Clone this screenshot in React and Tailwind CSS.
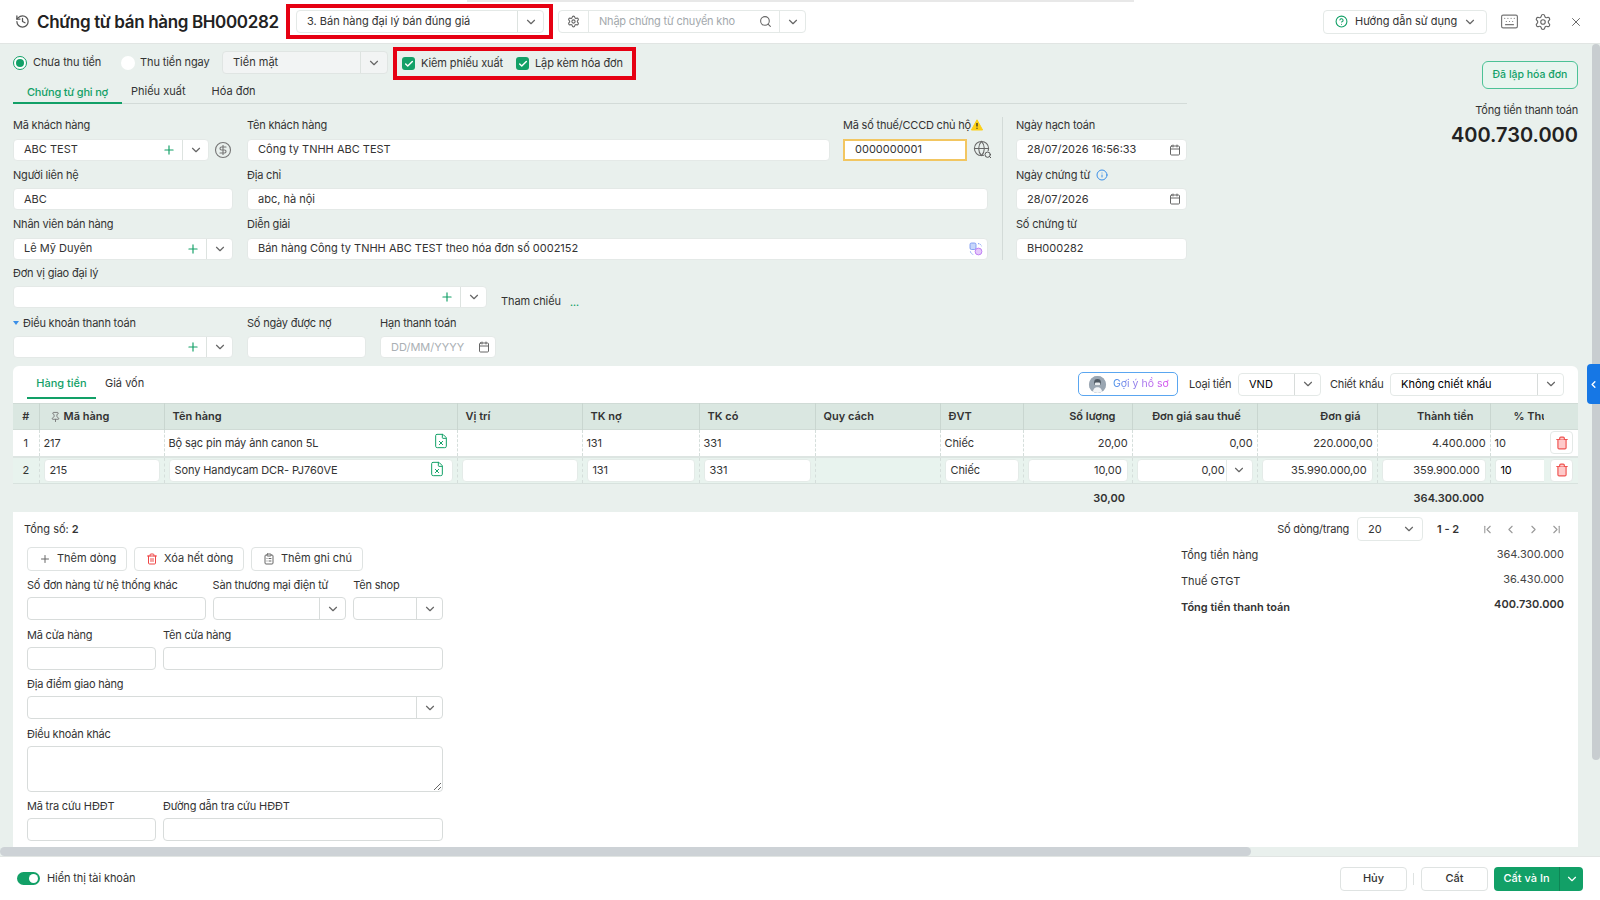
import React from "react";
import {
  History,
  ChevronDown,
  ChevronLeft,
  ChevronRight,
  ChevronFirst,
  ChevronLast,
  Settings,
  Search,
  CircleHelp,
  Keyboard,
  X,
  Plus,
  CircleDollarSign,
  Globe,
  Calendar,
  Info,
  Trash2,
  Pin,
  FileX,
  ClipboardList,
  Check,
} from "lucide-react";

// ô nhập cơ bản
function Box({ className = "", children }) {
  return (
    <div className={`h-[22px] bg-white rounded-[4px] border border-[#e4e9e7] flex items-center text-[11px] text-[#333] ${className}`}>
      {children}
    </div>
  );
}

function Combo({ value, plus, className = "" }) {
  return (
    <Box className={className}>
      <span className="flex-1 pl-[10px] truncate">{value}</span>
      {plus && <Plus className="w-[14px] h-[14px] text-[#12a067] mr-[6px]" strokeWidth={2} />}
      <span className="w-[26px] h-full border-l border-[#dde3e0] flex items-center justify-center shrink-0">
        <ChevronDown className="w-[14px] h-[14px] text-[#666]" />
      </span>
    </Box>
  );
}

function Field({ label, children, className = "" }) {
  return (
    <div className={`h-[49.5px] shrink-0 ${className}`}>
      <div className="h-[26.5px] flex items-center text-[11px] tracking-[-0.2px] text-[#333] whitespace-nowrap">{label}</div>
      {children}
    </div>
  );
}

function Check2({ label, className = "" }) {
  return (
    <div className={`flex items-center ${className}`}>
      <span className="w-[13px] h-[13px] rounded-[3px] bg-[#12a067] flex items-center justify-center">
        <Check className="w-[10px] h-[10px] text-white" strokeWidth={3.5} />
      </span>
      <span className="ml-[6px] text-[11px] tracking-[-0.1px] text-[#333] whitespace-nowrap">{label}</span>
    </div>
  );
}

function CalendarInput({ value, placeholder, className = "" }) {
  return (
    <Box className={className}>
      <span className={`flex-1 pl-[10px] ${placeholder ? "text-[#aab0b4]" : ""}`}>{value}</span>
      <Calendar className="w-[12px] h-[12px] text-[#666] mr-[5px]" />
    </Box>
  );
}

function SheetIcon() {
  return <FileX className="w-[16px] h-[16px] text-[#12a067] -mt-[3px]" strokeWidth={1.5} />;
}

function DelBtn() {
  return (
    <span className="w-[23px] h-[23px] rounded-[4px] bg-white border border-[#e4e9e7] flex items-center justify-center">
      <Trash2 className="w-[14px] h-[14px] text-[#ef5350] fill-[#fecaca]" />
    </span>
  );
}

function SoftBox({ className = "", chevron, children }) {
  return (
    <div className={`h-[23px] bg-white rounded-[4px] border border-[#d8dcdb] flex items-center text-[11px] ${className}`}>
      <span className="flex-1">{children}</span>
      {chevron && (
        <span className="w-[26px] h-full border-l border-[#d8dcdb] flex items-center justify-center">
          <ChevronDown className="w-[14px] h-[14px] text-[#666]" />
        </span>
      )}
    </div>
  );
}

function SmallLabel({ children, className = "" }) {
  return <div className={`h-[26.5px] pt-[3px] flex items-center text-[11px] tracking-[-0.2px] text-[#333] whitespace-nowrap ${className}`}>{children}</div>;
}

function CellInput({ children, right, className = "" }) {
  return (
    <div className={`h-[23px] bg-white rounded-[4px] border border-[#e4ebe8] flex items-center px-[5px] text-[11px] tracking-[-0.1px] ${right ? "justify-end" : ""} ${className}`}>
      {children}
    </div>
  );
}

function WarnIcon() {
  return (
    <svg viewBox="0 0 12 12" className="w-[12px] h-[12px]">
      <path d="M6 .8 11.6 11H.4Z" fill="#fdd017" stroke="#fdd017" strokeLinejoin="round" />
      <path d="M6 4v3.6M6 8.8v1" stroke="#222" strokeWidth="1.2" />
    </svg>
  );
}

function TemplateIcon() {
  return (
    <svg viewBox="0 0 14 14" className="w-[14px] h-[14px]">
      <rect x="1" y="1" width="6" height="6.5" rx="1.5" fill="#c7d7fb" stroke="#6f8ff0" strokeWidth=".8" />
      <circle cx="9.5" cy="9.5" r="3.4" fill="#e5c8fb" stroke="#b36cf0" strokeWidth=".8" />
      <path d="M9 1.6c2 0 3.4 1.3 3.6 3M1.4 9.4c.2 1.7 1.5 3 3.4 3.2" fill="none" stroke="#6f8ff0" strokeWidth=".9" strokeDasharray="1.4 1" />
    </svg>
  );
}

function Avatar() {
  return (
    <span className="w-[17px] h-[17px] rounded-full bg-[#aab4bf] flex items-center justify-center overflow-hidden shrink-0">
      <svg viewBox="0 0 16 16" className="w-[17px] h-[17px]">
        <rect width="16" height="16" fill="#9aa6b2" />
        <circle cx="8" cy="6" r="3.2" fill="#4f5963" />
        <rect x="5.6" y="6" width="4.8" height="3" rx="1" fill="#e8ecef" />
        <path d="M3.4 16c.3-3.8 2.2-5.4 4.6-5.4s4.300 1.600 4.600 5.400Z" fill="#f3f5f7" />
      </svg>
    </span>
  );
}

export default function App() {
  const th = "border-r border-[#c9d6d0] px-[8px] font-semibold text-[11px] text-[#333]";
  const td = "border-r border-dashed border-[#d5dedb] px-[4px] text-[11px] tracking-[-0.1px] text-[#333]";

  return (
    <div className="w-[1600px] h-[900px] overflow-hidden relative flex flex-col bg-[#e9f0ed]" style={{ fontFamily: "Inter, 'Noto Sans', sans-serif" }}>
      {/* dải xám trên cùng */}
      <div className="absolute top-0 left-[467px] w-[667px] h-[2px] bg-[#e8e8e8]" />

      {/* Header */}
      <header className="h-[44px] shrink-0 bg-white border-b border-[#e1e5e3] flex items-center pl-[15px] pr-[17px]">
        <History className="w-[15px] h-[15px] text-[#555]" />
        <h1 className="ml-[7px] w-[243px] text-[17px] leading-[24px] tracking-[-0.35px] font-semibold text-[#222] whitespace-nowrap">Chứng từ bán hàng BH000282</h1>
        <div className="ml-[6px] w-[267px] h-[35px] border-[4px] border-[#e60012] flex items-center pl-[6px] pr-[5px]">
          <div className="w-full h-[23px] bg-white rounded-[4px] border border-[#e4e9e7] flex items-center text-[11px] text-[#333]">
            <span className="flex-1 pl-[10px]">3. Bán hàng đại lý bán đúng giá</span>
            <span className="w-[26px] h-full border-l border-[#dde3e0] flex items-center justify-center">
              <ChevronDown className="w-[14px] h-[14px] text-[#666]" />
            </span>
          </div>
        </div>
        <div className="ml-[5px] w-[248px] h-[23px] rounded-[4px] border border-[#e4e9e7] flex items-center">
          <span className="w-[30px] h-full border-r border-[#e4e9e7] flex items-center justify-center">
            <Settings className="w-[13px] h-[13px] text-[#666]" />
          </span>
          <span className="flex-1 pl-[10px] text-[11px] tracking-[-0.2px] text-[#a3a9ad]">Nhập chứng từ chuyển kho</span>
          <Search className="w-[13px] h-[13px] text-[#666] mr-[7px]" />
          <span className="w-[26px] h-full border-l border-[#e4e9e7] flex items-center justify-center">
            <ChevronDown className="w-[14px] h-[14px] text-[#666]" />
          </span>
        </div>
        <div className="ml-auto w-[164px] h-[24px] rounded-[4px] border border-[#e4e9e7] flex items-center text-[11px] text-[#333]">
          <CircleHelp className="ml-[11px] w-[13px] h-[13px] text-[#12a067]" />
          <span className="ml-[7px] flex-1 whitespace-nowrap">Hướng dẫn sử dụng</span>
          <ChevronDown className="w-[14px] h-[14px] text-[#666] mr-[9px]" />
        </div>
        <Keyboard className="ml-[13px] w-[19px] h-[19px] text-[#777]" strokeWidth={1.5} />
        <Settings className="ml-[15px] w-[18px] h-[18px] text-[#666]" strokeWidth={1.5} />
        <X className="ml-[17px] w-[14px] h-[14px] text-[#555]" strokeWidth={1.5} />
      </header>

      {/* Nội dung */}
      <div className="flex-1 min-h-0 flex flex-col">
        <div className="flex-1 min-h-0 flex flex-col pl-[13px] pr-[22px]">
          <div className="flex shrink-0">
            <div className="w-[1174px]">
              {/* Thanh radio */}
              <div className="h-[36px] flex items-start">
                <div className="mt-[7px] h-[23px] flex items-center">
                  <span className="w-[14px] h-[14px] rounded-full bg-white border border-[#12a067] flex items-center justify-center">
                    <span className="w-[8px] h-[8px] rounded-full bg-[#12a067]" />
                  </span>
                  <span className="ml-[6px] w-[88px] text-[11px] tracking-[-0.1px] text-[#333]">Chưa thu tiền</span>
                  <span className="w-[14px] h-[14px] rounded-full bg-white" />
                  <span className="ml-[5px] w-[82px] text-[11px] tracking-[-0.1px] text-[#333] whitespace-nowrap">Thu tiền ngay</span>
                  <div className="w-[166px] h-[23px] bg-[#f2f4f4] rounded-[4px] border border-[#e0e5e3] flex items-center text-[11px] text-[#333]">
                    <span className="flex-1 pl-[10px]">Tiền mặt</span>
                    <span className="w-[27px] h-full border-l border-[#dde3e0] flex items-center justify-center">
                      <ChevronDown className="w-[14px] h-[14px] text-[#666]" />
                    </span>
                  </div>
                </div>
                <div className="ml-[5px] mt-[3px] w-[243px] h-[33px] border-[4px] border-[#e60012] flex items-center pl-[5px]">
                  <Check2 label="Kiêm phiếu xuất" className="w-[114px]" />
                  <Check2 label="Lập kèm hóa đơn" />
                </div>
              </div>

              {/* Tabs */}
              <div className="h-[24px] flex items-end border-b border-[#d3dbd8] text-[11px]">
                <div className="w-[109px] h-[24px] pt-[4px] text-center tracking-[-0.2px] border-b-[2px] border-[#12a067] text-[#12a067] -mb-px font-medium">Chứng từ ghi nợ</div>
                <div className="ml-[9px] h-[24px] pt-[4px] text-[#333]">Phiếu xuất</div>
                <div className="ml-[26px] h-[24px] pt-[4px] text-[#333]">Hóa đơn</div>
              </div>

              {/* Form */}
              <div className="mt-[8px] flex">
                <div className="w-[220px]">
                  <Field label="Mã khách hàng">
                    <div className="flex items-center">
                      <Combo value="ABC TEST" plus className="w-[196px]" />
                      <CircleDollarSign className="ml-[5px] w-[18px] h-[18px] text-[#777]" strokeWidth={1.5} />
                    </div>
                  </Field>
                  <Field label="Người liên hệ">
                    <Box className="w-[220px] pl-[10px]">ABC</Box>
                  </Field>
                  <Field label="Nhân viên bán hàng">
                    <Combo value="Lê Mỹ Duyên" plus className="w-[220px]" />
                  </Field>
                </div>
                <div className="ml-[14px] w-[741px] shrink-0">
                  <div className="flex">
                    <Field label="Tên khách hàng" className="w-[583px]">
                      <Box className="pl-[10px]">Công ty TNHH ABC TEST</Box>
                    </Field>
                    <Field className="ml-[13px] w-[124px]" label={
                      <span className="flex items-center">Mã số thuế/CCCD chủ hộ<WarnIcon /></span>
                    }>
                      <div className="h-[22px] bg-white border-[2px] border-[#f2c661] flex items-center pl-[10px] text-[11px] text-[#333]">0000000001</div>
                    </Field>
                    <span className="ml-[6px] mt-[28px] relative w-[18px] h-[18px] shrink-0">
                      <Globe className="w-[17px] h-[17px] text-[#666]" strokeWidth={1.5} />
                      <Search className="absolute -right-[1px] -bottom-[1px] w-[8px] h-[8px] text-[#555] bg-[#e9f0ed] rounded-full" strokeWidth={3} />
                    </span>
                  </div>
                  <Field label="Địa chỉ">
                    <Box className="pl-[10px]">abc, hà nội</Box>
                  </Field>
                  <Field label="Diễn giải">
                    <Box className="pl-[10px] justify-between pr-[4px]">
                      <span>Bán hàng Công ty TNHH ABC TEST theo hóa đơn số 0002152</span>
                      <TemplateIcon />
                    </Box>
                  </Field>
                </div>
                <div className="ml-[14px] mt-[5px] h-[143px] w-px bg-[#d3dbd8] shrink-0" />
                <div className="ml-[13px] w-[171px]">
                  <Field label="Ngày hạch toán">
                    <CalendarInput value="28/07/2026 16:56:33" />
                  </Field>
                  <Field label={<span className="flex items-center">Ngày chứng từ<Info className="ml-[6px] w-[12px] h-[12px] text-[#3b8fe8]" /></span>}>
                    <CalendarInput value="28/07/2026" />
                  </Field>
                  <Field label="Số chứng từ">
                    <Box className="pl-[10px]">BH000282</Box>
                  </Field>
                </div>
              </div>
              <div className="flex -mt-[1px]">
                <Field label="Đơn vị giao đại lý" className="w-[474px]">
                  <Combo plus className="w-[474px]" />
                </Field>
                <div className="ml-[14px] w-[57px] pt-[33px] text-[11px] tracking-[-0.1px] text-[#333] whitespace-nowrap">Tham chiếu</div>
                <div className="ml-[12px] pt-[35px] text-[9px] leading-[16px] font-bold text-[#12a067]">...</div>
              </div>
              <div className="flex -mt-[1px]">
                <Field className="w-[220px]" label={
                  <span className="flex items-center"><span className="w-0 h-0 border-x-[3px] border-x-transparent border-t-[4px] border-t-[#3b8fe8] mr-[1px]" /><span className="ml-[3px]">Điều khoản thanh toán</span></span>
                }>
                  <Combo plus className="w-[220px]" />
                </Field>
                <Field label="Số ngày được nợ" className="ml-[14px] w-[119px]">
                  <Box />
                </Field>
                <Field label="Hạn thanh toán" className="ml-[14px] w-[116px]">
                  <CalendarInput value="DD/MM/YYYY" placeholder />
                </Field>
              </div>
            </div>

            {/* Cột phải */}
            <div className="flex-1 flex flex-col items-end">
              <button className="mt-[17px] w-[96px] h-[28px] rounded-[6px] border border-[#4cc296] bg-[#e8f5ef] text-[10.5px] font-medium text-[#12a067]">Đã lập hóa đơn</button>
              <div className="mt-[13px] text-[11px] tracking-[-0.2px] text-[#333]">Tổng tiền thanh toán</div>
              <div className="mt-[2px] text-[20px] leading-[28px] font-semibold text-[#222]">400.730.000</div>
            </div>
          </div>

          {/* Card bảng */}
          <div className="mt-[7px] flex-1 min-h-0 bg-white rounded-t-[6px] overflow-hidden flex flex-col">
            <div className="h-[37px] shrink-0 flex items-start">
              <div className="ml-[14px] w-[69px] h-[33px] pt-[9px] text-center border-b-[2px] border-[#12a067] text-[11px] font-medium text-[#12a067]">Hàng tiền</div>
              <div className="ml-[9px] pt-[9px] text-[11px] text-[#333]">Giá vốn</div>
              <div className="ml-auto mt-[6px] flex items-center mr-[14px]">
                <div className="w-[100px] h-[24px] rounded-[5px] border border-[#5aa6f0] flex items-center pl-[10px]">
                  <Avatar />
                  <span className="ml-[7px] text-[10.5px] bg-gradient-to-r from-[#3b8fe8] to-[#d946ef] bg-clip-text text-transparent whitespace-nowrap">Gợi ý hồ sơ</span>
                </div>
                <span className="ml-[11px] w-[49px] text-[11px] tracking-[-0.2px] text-[#333]">Loại tiền</span>
                <SoftBox chevron className="w-[83px] pl-[10px] border-[#e4e9e7]">VND</SoftBox>
                <span className="ml-[9px] w-[60px] text-[11px] tracking-[-0.2px] text-[#333]">Chiết khấu</span>
                <SoftBox chevron className="w-[174px] pl-[10px] border-[#e4e9e7]">Không chiết khấu</SoftBox>
              </div>
            </div>

            <table className="w-[1565px] table-fixed border-collapse shrink-0">
              <colgroup>
                <col className="w-[26px]" />
                <col className="w-[125px]" />
                <col className="w-[293px]" />
                <col className="w-[125px]" />
                <col className="w-[117px]" />
                <col className="w-[116px]" />
                <col className="w-[125px]" />
                <col className="w-[83px]" />
                <col className="w-[109px]" />
                <col className="w-[125px]" />
                <col className="w-[120px]" />
                <col className="w-[113px]" />
                <col className="w-[53px]" />
                <col className="w-[35px]" />
              </colgroup>
              <thead>
                <tr className="h-[26px] bg-[#dae7e1] border-y border-[#d0dbd6]">
                  <th className={`${th} px-0 text-center`}>#</th>
                  <th className={`${th} text-left`}><span className="flex items-center pl-[2px]"><Pin className="w-[11px] h-[12px] text-[#777] mr-[3px]" />Mã hàng</span></th>
                  <th className={`${th} text-left`}>Tên hàng</th>
                  <th className={`${th} text-left`}>Vị trí</th>
                  <th className={`${th} text-left`}>TK nợ</th>
                  <th className={`${th} text-left`}>TK có</th>
                  <th className={`${th} text-left`}>Quy cách</th>
                  <th className={`${th} text-left`}>ĐVT</th>
                  <th className={`${th} text-right pr-[16px]`}>Số lượng</th>
                  <th className={`${th} text-center pl-[12px]`}>Đơn giá sau thuế</th>
                  <th className={`${th} text-right pr-[16px]`}>Đơn giá</th>
                  <th className={`${th} text-right pr-[16px]`}>Thành tiền</th>
                  <th className="font-semibold text-[11px] text-[#333] text-left">
                    <div className="ml-[23px] w-[30px] overflow-hidden whitespace-nowrap">% Thuế</div>
                  </th>
                  <th />
                </tr>
              </thead>
              <tbody>
                <tr className="h-[27px] border-b-[2px] border-[#dde5e2]">
                  <td className={`${td} text-center`}>1</td>
                  <td className={td}>217</td>
                  <td className={td}>
                    <div className="flex items-center justify-between pr-[4px]"><span>Bộ sạc pin máy ảnh canon 5L</span><SheetIcon /></div>
                  </td>
                  <td className={td} />
                  <td className={td}>131</td>
                  <td className={td}>331</td>
                  <td className={td} />
                  <td className={td}>Chiếc</td>
                  <td className={`${td} text-right`}>20,00</td>
                  <td className={`${td} text-right`}>0,00</td>
                  <td className={`${td} text-right`}>220.000,00</td>
                  <td className={`${td} text-right`}>4.400.000</td>
                  <td className="px-[4px] text-[11px] text-[#333]">10</td>
                  <td className="pl-[7px]"><DelBtn /></td>
                </tr>
                <tr className="h-[27px] bg-[#e8f3ee] border-b border-[#d8e2de]">
                  <td className={`${td} text-center`}>2</td>
                  <td className={td}><CellInput>215</CellInput></td>
                  <td className={td}>
                    <CellInput className="justify-between pr-[7px]"><span>Sony Handycam DCR- PJ760VE</span><SheetIcon /></CellInput>
                  </td>
                  <td className={td}><CellInput /></td>
                  <td className={td}><CellInput>131</CellInput></td>
                  <td className={td}><CellInput>331</CellInput></td>
                  <td className={td} />
                  <td className={td}><CellInput>Chiếc</CellInput></td>
                  <td className={td}><CellInput right>10,00</CellInput></td>
                  <td className={td}>
                    <div className="h-[23px] bg-white rounded-[4px] border border-[#e4ebe8] flex items-center text-[11px]">
                      <span className="flex-1 text-right pr-[1px]">0,00</span>
                      <span className="w-[26px] h-full border-l border-[#e4ebe8] flex items-center justify-center"><ChevronDown className="w-[14px] h-[14px] text-[#666]" /></span>
                    </div>
                  </td>
                  <td className={td}><CellInput right>35.990.000,00</CellInput></td>
                  <td className={td}><CellInput right>359.900.000</CellInput></td>
                  <td className="pl-[4px]"><CellInput className="rounded-r-none border-r-0 w-[49px]">10</CellInput></td>
                  <td className="pl-[7px]"><DelBtn /></td>
                </tr>
                <tr className="h-[28px] bg-[#e9f0ed] text-[11px] font-semibold text-[#333]">
                  <td colSpan={8} />
                  <td className="text-right pr-[7px]">30,00</td>
                  <td colSpan={2} />
                  <td className="text-right pr-[6px]">364.300.000</td>
                  <td colSpan={2} />
                </tr>
              </tbody>
            </table>

            {/* Tổng số + phân trang */}
            <div className="h-[35px] shrink-0 flex items-center pl-[11px] pr-[15px] text-[11px] text-[#333]">
              <span>Tổng số: <b className="font-semibold">2</b></span>
              <span className="ml-auto tracking-[-0.2px]">Số dòng/trang</span>
              <SoftBox className="ml-[8px] w-[66px] h-[24px] pl-[10px] pr-[6px] border-[#e4e9e7]">
                <span className="flex items-center justify-between">20<ChevronDown className="w-[14px] h-[14px] text-[#666]" /></span>
              </SoftBox>
              <span className="ml-[14px] w-[26px] font-semibold">1 - 2</span>
              <ChevronFirst className="ml-[18px] w-[13px] h-[13px] text-[#999]" />
              <ChevronLeft className="ml-[10px] w-[13px] h-[13px] text-[#999]" />
              <ChevronRight className="ml-[10px] w-[13px] h-[13px] text-[#999]" />
              <ChevronLast className="ml-[10px] w-[13px] h-[13px] text-[#999]" />
            </div>

            <div className="flex flex-1 min-h-0">
              <div className="ml-[14px] w-[416px]">
                <div className="flex gap-[7px]">
                  <div className="w-[100px] h-[24px] rounded-[4px] border border-[#dfe3e2] flex items-center pl-[11px] text-[11px] text-[#333]">
                    <Plus className="w-[12px] h-[12px] text-[#666]" /><span className="ml-[6px] whitespace-nowrap">Thêm dòng</span>
                  </div>
                  <div className="w-[110px] h-[24px] rounded-[4px] border border-[#dfe3e2] flex items-center pl-[11px] text-[11px] text-[#333]">
                    <Trash2 className="w-[12px] h-[12px] text-[#ef4444]" /><span className="ml-[6px] whitespace-nowrap">Xóa hết dòng</span>
                  </div>
                  <div className="w-[112px] h-[24px] rounded-[4px] border border-[#dfe3e2] flex items-center pl-[11px] text-[11px] text-[#333]">
                    <ClipboardList className="w-[12px] h-[12px] text-[#666]" /><span className="ml-[6px] whitespace-nowrap">Thêm ghi chú</span>
                  </div>
                </div>
                <div className="flex gap-[7px]">
                  <div className="w-[179px]"><SmallLabel>Số đơn hàng từ hệ thống khác</SmallLabel><SoftBox /></div>
                  <div className="w-[134px]"><SmallLabel>Sàn thương mại điện tử</SmallLabel><SoftBox chevron /></div>
                  <div className="w-[90px]"><SmallLabel>Tên shop</SmallLabel><SoftBox chevron /></div>
                </div>
                <div className="flex gap-[7px]">
                  <div className="w-[129px]"><SmallLabel>Mã cửa hàng</SmallLabel><SoftBox /></div>
                  <div className="w-[280px]"><SmallLabel>Tên cửa hàng</SmallLabel><SoftBox /></div>
                </div>
                <SmallLabel>Địa điểm giao hàng</SmallLabel>
                <SoftBox chevron className="w-[416px]" />
                <SmallLabel>Điều khoản khác</SmallLabel>
                <textarea readOnly className="block w-[416px] h-[46px] rounded-[4px] border border-[#d8dcdb] bg-white" />
                <div className="flex gap-[7px]">
                  <div className="w-[129px]"><SmallLabel>Mã tra cứu HĐĐT</SmallLabel><SoftBox /></div>
                  <div className="w-[280px]"><SmallLabel>Đường dẫn tra cứu HĐĐT</SmallLabel><SoftBox /></div>
                </div>
              </div>

              {/* Tổng kết */}
              <div className="ml-auto mr-[14px] -mt-[4px] w-[383px] text-[11px] text-[#333]">
                <div className="h-[26px] flex justify-between items-center"><span>Tổng tiền hàng</span><span className="text-[#444] mb-[2px]">364.300.000</span></div>
                <div className="h-[26px] flex justify-between items-center"><span>Thuế GTGT</span><span className="text-[#444] mb-[4px]">36.430.000</span></div>
                <div className="h-[26px] flex justify-between items-center font-semibold"><span>Tổng tiền thanh toán</span><span className="mb-[6px]">400.730.000</span></div>
              </div>
            </div>
          </div>
        </div>

        {/* Thanh cuộn ngang */}
        <div className="h-[9px] shrink-0 w-[1251px] rounded-full bg-[#cdd2d6]" />
      </div>

      {/* Footer */}
      <footer className="h-[44px] shrink-0 bg-white border-t border-[#e1e5e3] flex items-center pl-[17px] pr-[17px]">
        <span className="w-[23px] h-[13px] rounded-full bg-[#12a067] flex items-center justify-end pr-[2px]">
          <span className="w-[9px] h-[9px] rounded-full bg-white" />
        </span>
        <span className="ml-[7px] text-[11px] tracking-[-0.1px] text-[#333]">Hiển thị tài khoản</span>
        <button className="ml-auto w-[67px] h-[24px] rounded-[4px] border border-[#dfe3e2] text-[11px] font-medium text-[#333]">Hủy</button>
        <span className="ml-[6px] w-px h-[12px] bg-[#dfe3e2]" />
        <button className="ml-[7px] w-[67px] h-[24px] rounded-[4px] border border-[#dfe3e2] text-[11px] font-medium text-[#333]">Cất</button>
        <div className="ml-[6px] w-[89px] h-[24px] rounded-[4px] bg-[#12a067] flex items-center text-[11px] font-medium text-white">
          <span className="flex-1 text-center">Cất và In</span>
          <span className="w-[24px] h-full border-l border-[#0e8555] flex items-center justify-center"><ChevronDown className="w-[14px] h-[14px]" /></span>
        </div>
      </footer>

      {/* Thanh cuộn dọc + tay nắm */}
      <div className="absolute right-0 top-[44px] w-[8px] h-[716px] bg-[#c8cdd0] rounded-full" />
      <div className="absolute right-0 top-[364px] w-[13px] h-[40px] bg-[#1677e5] rounded-l-[4px] flex items-center justify-center">
        <ChevronLeft className="w-[11px] h-[11px] text-white" strokeWidth={3} />
      </div>
    </div>
  );
}
